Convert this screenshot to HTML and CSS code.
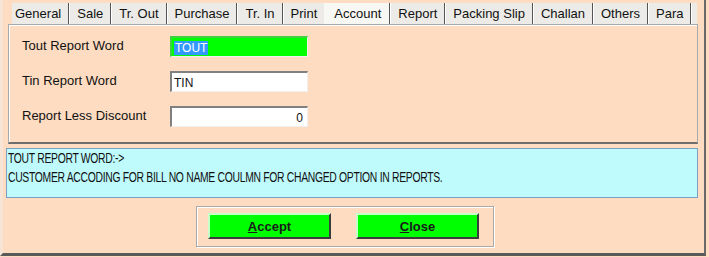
FILE: index.html
```html
<!DOCTYPE html>
<html lang="en">
<head>
    <meta charset="UTF-8">
    <title>Settings - Account</title>
    <link rel="stylesheet" href="styles.css">
</head>
<body>
    <div class="window">
        <!-- Tab strip -->
        <div class="tabs">
            <span class="tab first">General</span>
            <span class="tab">Sale</span>
            <span class="tab">Tr. Out</span>
            <span class="tab">Purchase</span>
            <span class="tab">Tr. In</span>
            <span class="tab no-sep">Print</span>
            <span class="tab active">Account</span>
            <span class="tab">Report</span>
            <span class="tab">Packing Slip</span>
            <span class="tab">Challan</span>
            <span class="tab">Others</span>
            <span class="tab">Para</span>
        </div>

        <!-- Account page -->
        <div class="panel">
            <div class="row">
                <label class="field-label">Tout Report Word</label>
                <div class="field green"><span class="selected">TOUT</span></div>
            </div>
            <div class="row">
                <label class="field-label">Tin Report Word</label>
                <div class="field">TIN</div>
            </div>
            <div class="row">
                <label class="field-label">Report Less Discount</label>
                <div class="field number">0</div>
            </div>
        </div>

        <!-- Help text -->
        <div class="info">
            <div class="info-text">
                <div>TOUT REPORT WORD:-&gt;</div>
                <div>CUSTOMER ACCODING FOR BILL NO NAME COULMN FOR CHANGED OPTION IN REPORTS.</div>
            </div>
        </div>

        <!-- Buttons -->
        <div class="button-box">
            <button class="btn"><u>A</u>ccept</button>
            <button class="btn"><u>C</u>lose</button>
        </div>
    </div>
</body>
</html>
```

FILE: styles.css
```css
/* Global Reset */
* {
    margin: 0;
    padding: 0;
    box-sizing: border-box;
}

body {
    font-family: 'Liberation Sans', Arial, sans-serif;
    background-color: #fddcc1;
    color: #111;
    font-size: 13px;
}

/* Outer window frame */
.window {
    width: 706px;
    height: 256px;
    padding-top: 3px;
    border-left: 3px solid #f6e4d6;
    border-right: 2px solid #6a6a6a;
    border-bottom: 3px solid #5a5a5a;
}

/* Tabs */
.tabs {
    display: flex;
    margin-left: 9px;
    width: 685px;
    height: 21px;
    background-color: #ecebe7;
}

.tab {
    padding: 0 7px 0 8px;
    line-height: 21px;
    white-space: nowrap;
    border-right: 1px solid #555;
    box-shadow: 1px 0 0 #fff;
}

.tab.first {
    padding-left: 3px;
}

.tab.no-sep {
    border-right: none;
    box-shadow: none;
}

.tab.active {
    background-color: #f7f7f4;
    padding-left: 10px;
    padding-right: 8px;
}

/* Tab page */
.panel {
    margin-left: 5px;
    width: 690px;
    height: 120px;
    padding: 11px 0 0 13px;
    border: 1px solid #a9a9a9;
    border-bottom: 2px solid #6e6e6e;
    box-shadow: inset 1px 1px 0 #fff;
}

.row {
    display: flex;
    align-items: center;
    height: 21px;
    margin-bottom: 14px;
}

.field-label {
    width: 148px;
    margin-top: -2px;
}

.field {
    width: 138px;
    height: 21px;
    padding: 2px 2px 0;
    font-size: 12px;
    line-height: 16px;
    background-color: #fff;
    border-top: 2px solid #808080;
    border-left: 2px solid #808080;
    border-right: 1px solid #f0f0f0;
    border-bottom: 1px solid #f0f0f0;
}

.field.green {
    background-color: #00ff00;
    border-top-color: #40d040;
    border-left-color: #40d040;
}

.field.number {
    text-align: right;
    padding-right: 4px;
}

.selected {
    background-color: #3399ff;
    color: #fff;
    padding: 0 1px;
}

/* Help text box */
.info {
    margin: 4px 0 0 3px;
    width: 692px;
    height: 50px;
    padding: 0 1px;
    background-color: #bffbfd;
    border: 1px solid #7d9ec3;
}

/* the original font is a narrow one */
.info-text {
    font-size: 14px;
    line-height: 19px;
    letter-spacing: -0.4px;
    white-space: nowrap;
    transform: scaleX(0.74);
    transform-origin: left top;
}

/* Button group */
.button-box {
    display: flex;
    gap: 25px;
    margin: 8px 0 0 193px;
    width: 298px;
    height: 41px;
    padding: 6px 0 0 11px;
    border: 1px solid #a9a9a9;
    box-shadow: inset 1px 1px 0 #fff, 1px 1px 0 #fff;
}

.btn {
    width: 123px;
    height: 26px;
    background-color: #00ff00;
    font-family: 'Liberation Sans', Arial, sans-serif;
    font-size: 13px;
    font-weight: bold;
    color: #1a1a1a;
    border: 2px solid;
    border-color: #c8ffc8 #3c3c3c #3c3c3c #c8ffc8;
}
```
